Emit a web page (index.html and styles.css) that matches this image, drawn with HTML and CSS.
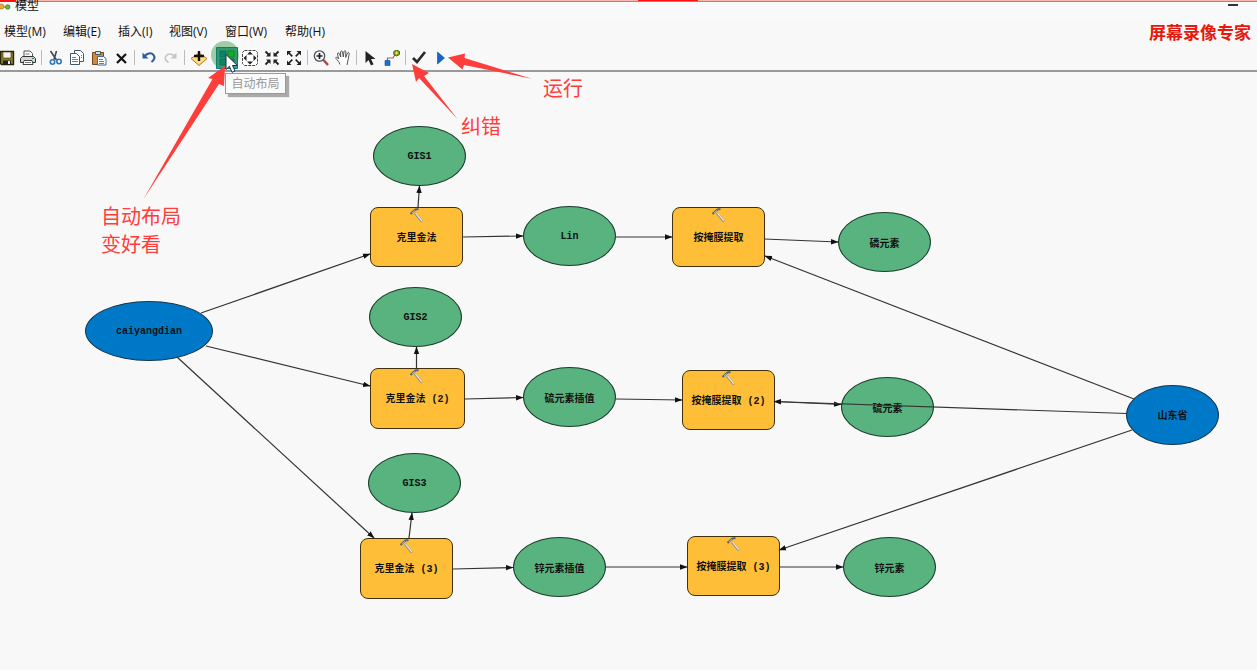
FILE: index.html
```html
<!DOCTYPE html>
<html lang="zh-CN">
<head>
<meta charset="utf-8">
<title>模型</title>
<link rel="stylesheet" href="styles.css">
</head>
<body>
<div class="window">
  <header class="titlebar">
    <svg class="app-icon" viewBox="0 0 11 8"><path d="M3 4h5" stroke="#777"/><circle cx="1.5" cy="3.5" r="2.5" fill="#e8ad35" stroke="#a97918" stroke-width=".7"/><circle cx="7.7" cy="4" r="2.3" fill="#65b944" stroke="#397a27" stroke-width=".7"/></svg>
    <span class="title">模型</span>
    <span class="minimize"></span>
    <span class="rec rec-left"></span><span class="rec rec-mid"></span>
  </header>
  <nav class="menu">
    <span>模型(M)</span><span>编辑(E)</span><span>插入(I)</span><span>视图(V)</span><span>窗口(W)</span><span>帮助(H)</span>
    <strong class="watermark">屏幕录像专家</strong>
  </nav>
  <div class="toolbar">
    <svg class="tool" viewBox="0 0 16 16"><path d="M1.5 1.5h13v13h-12l-1-1z" fill="#8a7c2c" stroke="#29240c" stroke-width="1.4"/><path d="M4 2h8v6H4z" fill="#f4f4ee" stroke="#39330f" stroke-width=".6"/><path d="M4 10.500h8V14H4z" fill="#222"/><path d="M9 11h2v3H9z" fill="#eee"/></svg>
    <svg class="tool" viewBox="0 0 16 16"><path d="M4 7V1h6l2.500 2.500V7" fill="#fff" stroke="#555"/><path d="M2.500 6.500h11l2 2v4H.5v-4z" fill="#d4d6db" stroke="#333"/><path d="M4 10.500h8l1 4H3z" fill="#fff" stroke="#444"/><path d="M5 12.500h6M5.500 4h4" stroke="#777"/><path d="M12 8.500h2" stroke="#278d42"/></svg>
    <i class="sep"></i>
    <svg class="tool" viewBox="0 0 16 16"><path d="M3.500 1l6 9M9.500 1L7 9.500" fill="none" stroke="#3f4854" stroke-width="1.600"/><circle cx="5.500" cy="12" r="2.200" fill="none" stroke="#2f76b5" stroke-width="1.600"/><circle cx="12" cy="11.500" r="2.200" fill="none" stroke="#2f76b5" stroke-width="1.600"/></svg>
    <svg class="tool" viewBox="0 0 16 16"><g fill="#fff" stroke="#45566c"><path d="M5.500.5h6l3 3v8h-9z"/><path d="M1.500 3.500h6l3 3v8h-9z"/></g><path d="M3 7.500h4M3 9.500h6M3 11.500h6M12 5.500h1M12 7.500h1" stroke="#5686b8"/></svg>
    <svg class="tool" viewBox="0 0 16 16"><path d="M1.500 2.500h11v12h-11z" fill="#c98b46" stroke="#724817"/><path d="M4.500 1.500h5v3h-5z" fill="#ddd" stroke="#555"/><path d="M6.500 6.500h6l2.500 2v6.500H6.500z" fill="#fff" stroke="#416b9c"/><path d="M8 9.500h4M8 11.500h5M8 13.500h5" stroke="#4d87bd"/></svg>
    <svg class="tool" viewBox="0 0 16 16"><path d="M4 4l9 9M13 4l-9 9" stroke="#151515" stroke-width="2.300"/></svg>
    <i class="sep sep-wide"></i>
    <svg class="tool" viewBox="0 0 16 16"><path d="M3 6.500c3-3 7-4.500 9.500-1.500 2 2.500.5 5-2 7" fill="none" stroke="#2a5d9f" stroke-width="2"/><path d="M1.500 2.500v6h6z" fill="#2a5d9f"/></svg>
    <svg class="tool" viewBox="0 0 16 16"><path d="M12 6.500c-3-3-7-3.500-9-.5-1.500 2.500 0 5 2.500 6.500" fill="none" stroke="#c3c6c9" stroke-width="1.500"/><path d="M13.500 2.500v6h-6z" fill="#c3c6c9"/></svg>
    <i class="sep sep-wide"></i>
    <svg class="tool tool-add" viewBox="0 0 16 16"><path d="M8 3l8 5.500-8 7-8-7z" fill="#ffdc7c" stroke="#ad7a28"/><path d="M8 1v10M3 6h10" stroke="#111" stroke-width="2.400"/></svg>
    <span class="tool-active">
      <svg class="tool-layout" viewBox="0 0 22 22"><path d="M.5.5h21v21H.5z" fill="#46a096" stroke="#08758e"/><path d="M4 4h6v6H4zM4 12h6v6H4zM12 12h6v6h-6z" fill="#087f89" stroke="#095f70"/><path d="M12 4h6v6h-6z" fill="#12c215" stroke="#07870c"/></svg>
    </span>
    <svg class="tool tool-extent" viewBox="0 0 16 16"><path d="M2.500.5h11l2 2v11l-2 2h-11l-2-2v-11z" fill="#fff" stroke="#444" stroke-dasharray="3 1"/><path d="M8 1.500l3 3H5zM8 14.500l3-3H5zM1.500 8l3-3v6zM14.500 8l-3-3v6z" fill="#222"/></svg>
    <svg class="tool" viewBox="0 0 16 16"><path d="M1.500 1.500l3 3M14.500 1.500l-3 3M1.500 14.500l3-3M14.500 14.500l-3-3" stroke="#222" stroke-width="1.800"/><path d="M6.500 2v4.500H2zM9.500 2v4.500H14zM6.500 14V9.500H2zM9.500 14V9.500H14z" fill="#222"/></svg>
    <svg class="tool" viewBox="0 0 16 16"><path d="M3 3l3.300 3.300M13 3L9.700 6.300M3 13l3.300-3.300M13 13L9.700 9.700" stroke="#222" stroke-width="1.700"/><path d="M1 1h4.500L1 5.500zM15 1h-4.500L15 5.500zM1 15h4.500L1 10.500zM15 15h-4.500l4.500-4.500z" fill="#222"/></svg>
    <i class="sep"></i>
    <svg class="tool" viewBox="0 0 16 16"><circle cx="6.500" cy="6" r="5.200" fill="#f7f9fb" stroke="#4a4e54" stroke-width="1.300"/><path d="M10.500 10l4.500 5" stroke="#a64846" stroke-width="2.500"/><path d="M6.500 3v6M3.500 6h6" stroke="#222" stroke-width="1.700"/></svg>
    <svg class="tool" viewBox="0 0 16 16"><path d="M5 14.500C4.500 12 2 10 .7 8.200c0-1.400 1.600-1.200 3 .8L2.500 4c0-1.400 1.500-1.500 2 0l1.300 3L5.500 2c.3-1.300 1.700-1.200 2 0L8.300 7 9 1.500c.4-1.200 1.800-1 1.800.3L10.700 7.500 12.500 3c.7-1 2-.5 1.700.8L13 10l-1 5" fill="#fff" stroke="#555"/></svg>
    <i class="sep"></i>
    <svg class="tool" viewBox="0 0 16 16"><path d="M3.500 1v12l3-3 2.500 5.500 2.500-1.200L9 9h4.500z" fill="#222"/></svg>
    <svg class="tool" viewBox="0 0 16 16"><path d="M3.500 12V8H9l2-3.500" fill="none" stroke="#96665e" stroke-width="1.200"/><path d="M1 10.500h5v5H1z" fill="#1675d1" stroke="#124c90" stroke-width=".6"/><path d="M12.500 0L15.500 1.500v3L12.500 6 9.800 4.500v-3z" fill="#86a319" stroke="#4f6707"/><path d="M12.500 1.500v3M11 3h3" stroke="#e5ec70"/></svg>
    <i class="sep"></i>
    <svg class="tool" viewBox="0 0 16 16"><path d="M2 8l4 4L14 2" fill="none" stroke="#2a2a2a" stroke-width="2.700"/></svg>
    <svg class="tool" viewBox="0 0 16 16"><path d="M4.500 2l7 6-7 6z" fill="#1368c5" stroke="#0e4c94" stroke-width=".6"/></svg>
  </div>
  <main class="canvas">
    <div class="node source n-points">caiyangdian</div>
    <div class="node source n-province">山东省</div>
    <div class="node data n-gis1">GIS1</div>
    <div class="node data n-gis2">GIS2</div>
    <div class="node data n-gis3">GIS3</div>
    <div class="node data n-lin">Lin</div>
    <div class="node data n-sulfur-grid">硫元素插值</div>
    <div class="node data n-zinc-grid">锌元素插值</div>
    <div class="node data n-phos">磷元素</div>
    <div class="node data n-sulfur">硫元素</div>
    <div class="node data n-zinc">锌元素</div>
    <div class="node process n-krig1">克里金法<svg class="hammer"><use href="#hammer"/></svg></div>
    <div class="node process n-krig2">克里金法 (2)<svg class="hammer"><use href="#hammer"/></svg></div>
    <div class="node process n-krig3">克里金法 (3)<svg class="hammer"><use href="#hammer"/></svg></div>
    <div class="node process n-mask1">按掩膜提取<svg class="hammer"><use href="#hammer"/></svg></div>
    <div class="node process n-mask2">按掩膜提取 (2)<svg class="hammer"><use href="#hammer"/></svg></div>
    <div class="node process n-mask3">按掩膜提取 (3)<svg class="hammer"><use href="#hammer"/></svg></div>
  </main>
  <svg class="edges" viewBox="0 0 1257 670">
    <defs>
      <marker id="head" markerWidth="8" markerHeight="6" refX="7" refY="3" orient="auto" markerUnits="userSpaceOnUse"><path d="M0 .3L7.500 3 0 5.700z" fill="#111"/></marker>
      <symbol id="hammer" viewBox="0 0 14 15"><path d="M5 5l7 8.500" stroke="#888" stroke-width="2.600"/><path d="M5.500 5l6.500 8" stroke="#eee0cb" stroke-width="1.400"/><path d="M.5 6l5-4.500 3-.5" fill="none" stroke="#596775" stroke-width="2"/><path d="M2 5l3-2.500" stroke="#c9d5dc" stroke-width=".8"/></symbol>
    </defs>
    <g class="edge-lines">
      <path d="M201 313L370 254"/><path d="M206 346L370 386"/><path d="M177 357L374 538"/>
      <path d="M418 207L419.500 186"/><path d="M416.500 368V347"/><path d="M409 538L412 513"/>
      <path d="M463 237L523 236"/><path d="M465 399L523 397.500"/><path d="M453 569L513 567.500"/>
      <path d="M616 237H672"/><path d="M616 399L682 400"/><path d="M605 567H687"/>
      <path d="M764 239L838 242"/><path d="M774 401.500L841 404.500"/><path d="M779 567H843"/>
      <path d="M1134 399L765 256"/><path d="M1127 413.500L774 401.500"/><path d="M1132 430L779 550"/>
    </g>
  </svg>
  <div class="tooltip">自动布局</div>
  <svg class="marks" viewBox="0 0 1257 670">
    <circle cx="225" cy="55" r="14" fill="#188d32" fill-opacity=".4"/>
    <g fill="#ff3d3b"><path d="M225 66l-17 12 4.500 1L143.500 199 219 84l5 2z"/><path d="M412 64l4 18 3-4 38.500 41L424 76l5-3z"/><path d="M448 57.500l17-4-.5 4.500L532 78.800 464 65l-1.500 4.500z"/></g>
    <path d="M226 54.500v15l3.400-3.200 2.600 6 3-1.300-2.500-5.500h4.800z" fill="#fff" stroke="#16334d"/>
  </svg>
  <div class="note note-layout">自动布局<br>变好看</div>
  <div class="note note-check">纠错</div>
  <div class="note note-run">运行</div>
</div>
</body>
</html>
```
FILE: styles.css
```css
* { box-sizing: border-box; }
body { margin: 0; overflow: hidden; }
.window {
  position: relative;
  display: flex;
  flex-direction: column;
  width: 1257px;
  height: 670px;
  overflow: hidden;
  background: #f8f8f8;
  color: #111;
  font: 12px "Open Sans", "Noto Sans CJK SC", sans-serif;
}
.titlebar {
  position: relative;
  display: flex;
  height: 20px;
  padding-top: 3px;
  background: linear-gradient(#f9b9b2 0 1px, #e96861 1px 2px, #fff 2px 3px, #f8f9fb 3px);
}
.app-icon { width: 11px; height: 8px; margin-right: 4px; }
.title { height: 12px; margin-top: -3px; line-height: 12px; }
.minimize { width: 10px; height: 2px; margin: 1px 19px 0 auto; background: #333; }
.rec { position: absolute; top: 0; height: 2px; background: #f11; }
.rec-left { left: 0; width: 16px; }
.rec-mid { left: 638px; width: 60px; height: 1px; }
.menu {
  display: grid;
  grid-template-columns: 59px 55px 51px 56px 60px 60px 1fr;
  height: 25px;
  padding: 0 6px 0 4px;
  line-height: 23px;
  white-space: nowrap;
}
.watermark {
  justify-self: end;
  color: #e51a0c;
  font: bold 17px/24px "Noto Sans CJK SC", sans-serif;
}
.toolbar {
  display: flex;
  align-items: center;
  height: 27px;
  border-bottom: 2px solid #999;
}
.tool { flex: none; width: 16px; height: 16px; margin: 0 3px; }
.tool:first-child { margin-left: -1px; margin-right: 2px; }
.sep { flex: none; width: 1px; height: 15px; margin: 0 2px; background: #bbb; }
.sep-wide { margin-right: 3px; }
.tool-add { margin-right: 9px; }
.tool-extent { margin-left: 4px; }
.tool-active { flex: none; width: 22px; height: 22px; }
.tool-layout { display: block; width: 22px; height: 22px; }
.canvas { flex: 1; }
.node {
  position: absolute;
  display: flex;
  align-items: center;
  justify-content: center;
  width: 93px;
  height: 60px;
  border: 1.500px solid #222;
  color: #111;
  font: bold 10px "Liberation Mono", "Noto Sans CJK SC", monospace;
  white-space: pre;
}
.source { border-radius: 50%; border-color: #12364d; background: #0078c8; }
.data { border-radius: 50%; border-color: #193d2a; background: #58b37f; }
.process { padding-bottom: 2px; border-radius: 8px; border-color: #42300c; background: #ffbe38; }
.hammer { position: absolute; left: 39px; top: 0; width: 14px; height: 15px; }
.n-points { left: 85px; top: 301px; width: 128px; }
.n-province { left: 1126px; top: 385px; padding-bottom: 2px; }
.n-gis1 { left: 373px; top: 126px; }
.n-gis2 { left: 369px; top: 287px; }
.n-gis3 { left: 368px; top: 453px; }
.n-lin { left: 523px; top: 206px; }
.n-sulfur-grid { left: 523px; top: 367px; }
.n-zinc-grid { left: 513px; top: 537px; }
.n-phos { left: 838px; top: 212px; }
.n-sulfur { left: 841px; top: 377px; }
.n-zinc { left: 843px; top: 537px; }
.n-krig1 { left: 370px; top: 207px; }
.n-krig2 { left: 370px; top: 368px; width: 95px; height: 61px; }
.n-krig3 { left: 360px; top: 538px; height: 61px; }
.n-mask1 { left: 672px; top: 207px; }
.n-mask2 { left: 682px; top: 370px; }
.n-mask3 { left: 687px; top: 536px; }
.edges, .marks { position: absolute; left: 0; top: 0; width: 1257px; height: 670px; pointer-events: none; }
.edge-lines { fill: none; stroke: #333; stroke-width: 1.200; }
.edge-lines path { marker-end: url(#head); }
.tooltip {
  position: absolute;
  left: 225px;
  top: 73px;
  width: 61px;
  height: 21px;
  border: 1px solid #999;
  background: #fafafa;
  box-shadow: 3px 3px 1px #aaa;
  color: #999;
  line-height: 19px;
  text-align: center;
}
.note {
  position: absolute;
  color: #ff3d3b;
  font: 400 20px/28px "Noto Sans CJK SC", sans-serif;
  white-space: nowrap;
}
.note-layout { left: 101px; top: 202px; }
.note-check { left: 461px; top: 112px; }
.note-run { left: 543px; top: 74px; }
```
